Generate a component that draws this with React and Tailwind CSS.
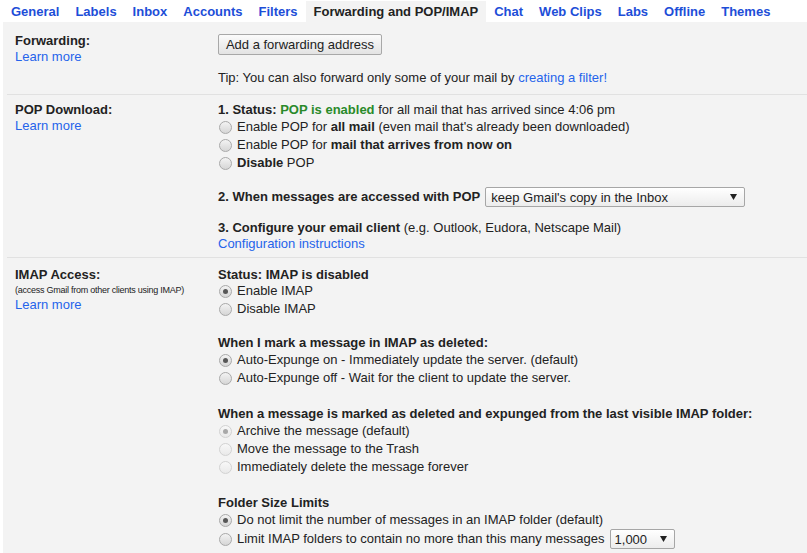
const tabs = ["General", "Labels", "Inbox", "Accounts", "Filters", "Forwarding and POP/IMAP", "Chat", "Web Clips", "Labs", "Offline", "Themes"];

function Arrow() {
  return (
    <svg width="7" height="6" viewBox="0 0 7 6" className="shrink-0">
      <path d="M0 0H7L3.5 6Z" fill="#222" />
    </svg>
  );
}

function Select({ children, wide }) {
  return (
    <span
      className={
        wide
          ? "ml-[5px] w-[260px] h-[20px] flex items-center justify-between border border-[#a6a6a6] rounded-[2px] bg-linear-to-b from-white to-[#ececec] pl-[5px] pr-[7px] font-normal leading-none"
          : "ml-[5px] w-[65px] h-[20px] flex items-center justify-between border border-[#a6a6a6] rounded-[2px] bg-linear-to-b from-white to-[#ececec] pl-[4px] pr-[7px] font-normal leading-none"
      }
    >
      <span>{children}</span>
      <Arrow />
    </span>
  );
}

function Radio({ checked, disabled, children, h20 }) {
  const circle = disabled
    ? "ml-px mr-[5px] w-[13px] h-[13px] shrink-0 rounded-full border border-[#d2d2d2] bg-linear-to-b from-[#f8f8f8] to-[#e9e9e9] flex items-center justify-center"
    : "ml-px mr-[5px] w-[13px] h-[13px] shrink-0 rounded-full border border-[#a9a9a9] bg-linear-to-b from-[#f3f3f3] to-[#d6d6d6] flex items-center justify-center";
  const dot = disabled
    ? "w-[5px] h-[5px] rounded-full bg-[#a8a8a8]"
    : "w-[5px] h-[5px] rounded-full bg-[#575757]";
  return (
    <div className={h20 ? "flex items-center h-[20px]" : "flex items-center h-[18px]"}>
      <span className={circle}>{checked ? <span className={dot} /> : null}</span>
      <span className="flex items-center">{children}</span>
    </div>
  );
}

const link = "text-[#2563eb] cursor-pointer";

export default function App() {
  return (
    <div className="font-['Liberation_Sans',Arial,sans-serif] text-[13px] text-[#222] bg-white w-[807px]">
      {/* Tabs */}
      <div className="flex pl-[3px] h-[22px]">
        {tabs.map((t) =>
          t === "Forwarding and POP/IMAP" ? (
            <div key={t} className="px-2 h-[22px] leading-[22px] border-t border-white bg-[#f3f3f3] font-bold text-[#222] whitespace-nowrap">
              {t}
            </div>
          ) : (
            <div key={t} className="px-2 h-[22px] pt-px leading-[22px] font-bold text-[#1d4ed8] whitespace-nowrap cursor-pointer">
              {t}
            </div>
          )
        )}
      </div>

      {/* Panel */}
      <div className="ml-[3px] bg-[#f3f3f3] pb-[4px]">
        {/* Forwarding */}
        <div className="ml-1 pl-2 pt-[11px] pb-2 flex">
          <div className="w-[203px] shrink-0 leading-4">
            <div className="font-bold">Forwarding:</div>
            <div className={link}>Learn more</div>
          </div>
          <div className="flex-1">
            <button className="mt-px w-[164px] h-[21px] border border-[#a8a8a8] rounded-[2px] bg-linear-to-b from-[#fbfbfb] to-[#e3e3e3] text-[13px] text-[#222] leading-none">
              Add a forwarding address
            </button>
            <div className="mt-[14px] leading-4 pt-px">
              Tip: You can also forward only some of your mail by <span className={link}>creating a filter!</span>
            </div>
          </div>
        </div>

        {/* POP */}
        <div className="ml-1 pl-2 pt-[7px] pb-[6px] border-t border-[#e1e1e1] flex">
          <div className="w-[203px] shrink-0 leading-4">
            <div className="font-bold">POP Download:</div>
            <div className={link}>Learn more</div>
          </div>
          <div className="flex-1">
            <div className="leading-4">
              <b>1. Status:</b> <b className="text-[#2a8a2a]">POP is enabled</b> for all mail that has arrived since 4:06 pm
            </div>
            <Radio>
              Enable POP for&nbsp;<b>all mail</b>&nbsp;(even mail that's already been downloaded)
            </Radio>
            <Radio>
              Enable POP for&nbsp;<b>mail that arrives from now on</b>
            </Radio>
            <Radio>
              <b>Disable</b>&nbsp;POP
            </Radio>
            <div className="mt-[15px] flex items-center h-[20px]">
              <b>2. When messages are accessed with POP</b>
              <Select wide>keep Gmail's copy in the Inbox</Select>
            </div>
            <div className="mt-[13px] leading-4">
              <b>3. Configure your email client</b> (e.g. Outlook, Eudora, Netscape Mail)
            </div>
            <div className="leading-[15px]">
              <span className={link}>Configuration instructions</span>
            </div>
          </div>
        </div>

        {/* IMAP */}
        <div className="ml-1 pl-2 pt-2 border-t border-[#e1e1e1] flex">
          <div className="w-[203px] shrink-0">
            <div className="font-bold leading-4 pt-px">IMAP Access:</div>
            <div className="mt-[1px] h-[13px] leading-[13px] text-[9px] tracking-[-0.25px] whitespace-nowrap">
              (access Gmail from other clients using IMAP)
            </div>
            <div className={"leading-4 " + link}>Learn more</div>
          </div>
          <div className="flex-1">
            <div className="font-bold leading-4 pt-px">Status: IMAP is disabled</div>
            <div className="-mt-px">
              <Radio checked>Enable IMAP</Radio>
              <Radio>Disable IMAP</Radio>
            </div>

            <div className="mt-[17px] font-bold leading-4">When I mark a message in IMAP as deleted:</div>
            <Radio checked>Auto-Expunge on - Immediately update the server. (default)</Radio>
            <Radio>Auto-Expunge off - Wait for the client to update the server.</Radio>

            <div className="mt-[18px] font-bold leading-4 pt-px">
              When a message is marked as deleted and expunged from the last visible IMAP folder:
            </div>
            <Radio checked disabled>Archive the message (default)</Radio>
            <Radio disabled>Move the message to the Trash</Radio>
            <Radio disabled>Immediately delete the message forever</Radio>

            <div className="mt-[19px] font-bold leading-4">Folder Size Limits</div>
            <Radio checked>Do not limit the number of messages in an IMAP folder (default)</Radio>
            <Radio h20>
              Limit IMAP folders to contain no more than this many messages
              <Select>1,000</Select>
            </Radio>
          </div>
        </div>
      </div>
    </div>
  );
}
